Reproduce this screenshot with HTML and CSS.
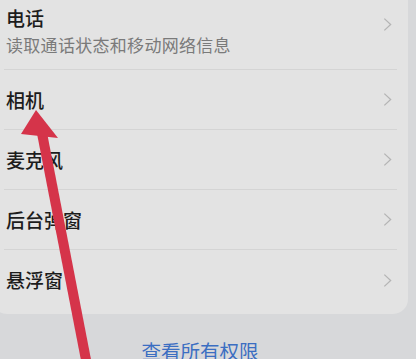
FILE: index.html
```html
<!DOCTYPE html>
<html lang="zh">
<head>
<meta charset="utf-8">
<link rel="stylesheet" href="styles.css">
</head>
<body>
<div class="page">
  <div class="card">
    <div class="row row-tall">
      <div class="text">
        <div class="title">电话</div>
        <div class="sub">读取通话状态和移动网络信息</div>
      </div>
      <svg class="chev" viewBox="0 0 10 16"><path d="M1.5 1.5 L8.5 8 L1.5 14.5" /></svg>
    </div>
    <div class="row">
      <div class="title">相机</div>
      <svg class="chev" viewBox="0 0 10 16"><path d="M1.5 1.5 L8.5 8 L1.5 14.5" /></svg>
    </div>
    <div class="row">
      <div class="title">麦克风</div>
      <svg class="chev" viewBox="0 0 10 16"><path d="M1.5 1.5 L8.5 8 L1.5 14.5" /></svg>
    </div>
    <div class="row">
      <div class="title">后台弹窗</div>
      <svg class="chev" viewBox="0 0 10 16"><path d="M1.5 1.5 L8.5 8 L1.5 14.5" /></svg>
    </div>
    <div class="row row-last">
      <div class="title">悬浮窗</div>
      <svg class="chev" viewBox="0 0 10 16"><path d="M1.5 1.5 L8.5 8 L1.5 14.5" /></svg>
    </div>
  </div>
  <div class="more">查看所有权限</div>
</div>
<svg class="arrow" viewBox="0 0 416 359" width="416" height="359">
  <line x1="41" y1="128" x2="87" y2="365" stroke="#d5344a" stroke-width="10" />
  <polygon points="36,110 21,134 58,138" fill="#d5344a" />
</svg>
</body>
</html>
```
FILE: styles.css
```css
html, body {
  margin: 0;
  padding: 0;
}
body {
  width: 416px;
  height: 359px;
  overflow: hidden;
  background: #d7d8da;
  font-family: "Noto Sans CJK SC", "Noto Sans", sans-serif;
  position: relative;
}
.page {
  display: flex;
  flex-direction: column;
  margin-left: -8px;
  width: 416px;
}
.card {
  margin-top: -8px;
  background: #e3e3e3;
  border-radius: 0 0 15px 15px;
  padding: 0 11px 4px 12px;
  display: flex;
  flex-direction: column;
}
.row {
  height: 59px;
  display: flex;
  align-items: center;
  justify-content: space-between;
  border-bottom: 1px solid #d4d4d4;
  padding-left: 2px;
  padding-right: 5px;
}
.row-tall {
  height: 78px;
  box-sizing: border-box;
  padding-top: 13px;
  padding-bottom: 13px;
  align-items: flex-start;
}
.row-tall .chev {
  margin-top: 12px;
}
.row-last {
  border-bottom: none;
  height: 60px;
}
.title {
  font-size: 19px;
  line-height: 26px;
  font-weight: 500;
  color: #1c1c1c;
}
.sub {
  margin-top: 3px;
  font-size: 17px;
  line-height: 22px;
  letter-spacing: 0.3px;
  color: #7a7a7a;
}
.chev {
  width: 9px;
  height: 15px;
  fill: none;
  stroke: #b4b4b4;
  stroke-width: 1.4;
}
.more {
  margin-top: 24px;
  text-align: center;
  font-size: 19.5px;
  line-height: 26px;
  color: #3b6ec2;
}
.arrow {
  position: absolute;
  left: 0;
  top: 0;
  pointer-events: none;
}
```
